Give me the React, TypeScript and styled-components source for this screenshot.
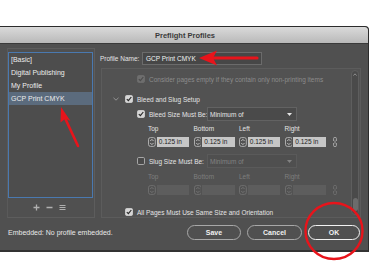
import React from 'react';
import styled, {createGlobalStyle} from 'styled-components';

const GlobalStyle = createGlobalStyle`
  html, body {
    margin: 0;
    padding: 0;
    background: #ffffff;
    width: 371px;
    height: 278px;
    overflow: hidden;
    font-family: "Liberation Sans", Arial, sans-serif;
  }
`

const Page = styled.div`
  position: relative;
  width: 371px;
  height: 278px;
  padding-top: 26px;
  box-sizing: border-box;
`

const Dialog = styled.div`
  width: 369px;
  height: 226px;
  box-sizing: border-box;
  border: 1px solid #2c2c2c;
  border-left: none;
  border-bottom: 2px solid #333;
  border-radius: 0 4px 0 0;
  background: #505050;
  display: flex;
  flex-direction: column;
  overflow: hidden;
`

const TitleBar = styled.div`
  height: 16px;
  flex: 0 0 auto;
  background: linear-gradient(#dadada, #b9b9b9);
  border-bottom: 1px solid #3a3a3a;
  border-radius: 0 3px 0 0;
  display: flex;
  align-items: center;
  justify-content: center;
  font-size: 7.5px;
  font-weight: bold;
  color: #3a3a3a;
  padding-left: 2px;
`

const Body = styled.div`
  flex: 1;
  padding: 4px 6px 0 7px;
  display: flex;
  flex-direction: column;
  color: #e4e4e4;
  font-size: 6.5px;
`

const Main = styled.div`
  display: flex;
  height: 170px;
`

const ProfilesPanel = styled.div`
  width: 88px;
  height: 170px;
  box-sizing: border-box;
  border: 1px solid #5d5d5d;
  border-left-color: #5a5a5a;
  padding: 3px 1px 0 0;
  display: flex;
  flex-direction: column;
  margin-right: 5px;
`

const ProfileList = styled.ul`
  list-style: none;
  margin: 0;
  padding: 0;
  height: 146px;
  box-sizing: border-box;
  border: 1px solid #4a79b0;
  background: #4d4d4d;
`

const ProfileItem = styled.li<{ $selected?: boolean }>`
  height: 13px;
  line-height: 13px;
  padding-left: 2px;
  font-size: 7px;
  background: ${({$selected}) => $selected ? '#5b6b7d' : 'transparent'};
  color: #ececec;
`

const ListTools = styled.div`
  flex: 1;
  display: flex;
  align-items: center;
  justify-content: center;
  gap: 6px;
  padding-right: 3px;
  color: #a9a9a9;
`

const RightColumn = styled.div`
  width: 261px;
  display: flex;
  flex-direction: column;
`

const NameRow = styled.div`
  margin-top: 4px;
  height: 13px;
  display: flex;
  align-items: center;
`

const NameLabel = styled.span`
  width: 42px;
`

const NameInput = styled.div`
  width: 120px;
  height: 13px;
  box-sizing: border-box;
  border: 1px solid #6b6b6b;
  background: #474747;
  padding-left: 3px;
  line-height: 11px;
  color: #f2f2f2;
`

const ScrollPanel = styled.div`
  margin: 3px 0 0 1px;
  width: 260px;
  height: 150px;
  box-sizing: border-box;
  border: 1px solid #5c5c5c;
  background: #525252;
  display: flex;
`

const Content = styled.div`
  flex: 1;
  padding-top: 5px;
  display: flex;
  flex-direction: column;
`

const Row = styled.div<{ $top: number; $indent: number; $h?: number }>`
  margin-top: ${({$top}) => $top}px;
  padding-left: ${({$indent}) => $indent}px;
  height: ${({$h}) => $h ?? 10}px;
  display: flex;
  align-items: center;
  white-space: nowrap;
`

const Text = styled.span<{ $dim?: boolean; $gap?: number }>`
  margin-left: ${({$gap}) => $gap ?? 3}px;
  color: ${({$dim}) => $dim ? '#8c8c8c' : '#e4e4e4'};
`

const SizeLabel = styled.span`
  width: 54px;
  margin-left: 4px;
`

const Dropdown = styled.div<{ $disabled?: boolean }>`
  margin-left: 4px;
  width: 90px;
  height: 14px;
  box-sizing: border-box;
  border: 1px solid ${({$disabled}) => $disabled ? '#5a5a5a' : '#626262'};
  background: ${({$disabled}) => $disabled ? '#4f4f4f' : '#4a4a4a'};
  display: flex;
  align-items: center;
  justify-content: space-between;
  padding: 0 4px 0 2px;
  color: ${({$disabled}) => $disabled ? '#828282' : '#e6e6e6'};
`

const Grid = styled.div`
  display: grid;
  grid-template-columns: repeat(4, 41px);
  column-gap: 4.5px;
  align-items: center;
`

const FieldLabel = styled.span<{ $dim?: boolean }>`
  color: ${({$dim}) => $dim ? '#7e7e7e' : '#e4e4e4'};
`

const Spinner = styled.div`
  display: flex;
  align-items: center;
  gap: 1px;
`

const NumberBox = styled.div<{ $disabled?: boolean }>`
  width: 33px;
  height: 10px;
  box-sizing: border-box;
  background: ${({$disabled}) => $disabled ? '#5d5d5d' : '#c6c6c6'};
  color: #222;
  font-size: 6.5px;
  line-height: 10px;
  padding-left: 2px;
`

const ScrollBar = styled.div`
  width: 8px;
  margin: 1px 1px 2px 0;
  box-sizing: border-box;
  border: 1px solid #5e5e5e;
  border-radius: 4px;
  background: #4a4a4a;
  display: flex;
  flex-direction: column;
  align-items: center;
  justify-content: space-between;
  padding: 2px 0 3px;
`

const Thumb = styled.div`
  width: 5px;
  height: 13px;
  border-radius: 3px;
  background: #6c6c6c;
`

const Footer = styled.div`
  margin-top: 7px;
  height: 15px;
  display: flex;
  align-items: center;
  justify-content: space-between;
`

const EmbeddedNote = styled.span`
  margin-left: 1px;
  font-size: 7px;
  color: #e8e8e8;
`

const Buttons = styled.div`
  display: flex;
  gap: 6px;
  padding-right: 2px;
`

const Button = styled.div<{ $w: number; $primary?: boolean }>`
  width: ${({$w}) => $w}px;
  height: 15px;
  box-sizing: border-box;
  border-radius: 8px;
  border: ${({$primary}) => $primary ? '1.5px solid #f2f2f2' : '1px solid #a8a8a8'};
  display: flex;
  align-items: center;
  justify-content: center;
  font-size: 7px;
  font-weight: bold;
  color: #f0f0f0;
`

const Annotations = styled.svg`
  position: absolute;
  left: 0;
  top: 0;
  pointer-events: none;
`

const CheckBox = ({checked, disabled}: { checked?: boolean; disabled?: boolean }) => (
  <svg width="8" height="8" viewBox="0 0 8 8" style={{flex: '0 0 auto'}}>
    <rect x="0.5" y="0.5" width="7" height="7" rx="1.2"
          fill={checked ? (disabled ? '#6e6e6e' : '#d6d6d6') : '#4a4a4a'}
          stroke={checked ? (disabled ? '#6e6e6e' : '#d6d6d6') : '#bdbdbd'} strokeWidth="0.8"/>
    {checked && <path d="M1.8 4.1 L3.4 5.7 L6.3 2" fill="none"
                      stroke={disabled ? '#4c4c4c' : '#2a2a2a'} strokeWidth="1.2"/>}
  </svg>
)

const SpinIcon = ({disabled}: { disabled?: boolean }) => (
  <svg width="8" height="10" viewBox="0 0 8 10">
    <rect x="0.5" y="0.5" width="7" height="9" rx="2" fill="none"
          stroke={disabled ? '#777' : '#c8c8c8'} strokeWidth="0.8"/>
    <path d="M2.3 4 L4 2.3 L5.7 4 M2.3 6 L4 7.7 L5.7 6" fill="none"
          stroke={disabled ? '#777' : '#d0d0d0'} strokeWidth="0.9"/>
  </svg>
)

const LinkIcon = ({disabled}: { disabled?: boolean }) => (
  <svg width="4" height="10" viewBox="0 0 4 10" style={{marginLeft: 7}}>
    <path d="M0.6 4 V1.6 A1.4 1.4 0 0 1 3.4 1.6 V4 M0.6 6 V8.4 A1.4 1.4 0 0 0 3.4 8.4 V6"
          fill="none" stroke={disabled ? '#737373' : '#bdbdbd'} strokeWidth="0.8"/>
    <path d="M2 3.5 V6.5" stroke={disabled ? '#737373' : '#bdbdbd'} strokeWidth="0.8"/>
  </svg>
)

const Caret = () => (
  <svg width="5" height="3" viewBox="0 0 5 3">
    <path d="M0 0 H5 L2.5 3 Z" fill="currentColor"/>
  </svg>
)

const Chevron = () => (
  <svg width="6" height="4" viewBox="0 0 6 4" style={{marginRight: 6}}>
    <path d="M0.5 0.8 L3 3.2 L5.5 0.8" fill="none" stroke="#9a9a9a" strokeWidth="0.9"/>
  </svg>
)

const ToolIcon = ({kind}: { kind: 'plus' | 'minus' | 'menu' }) => (
  <svg width="7" height="7" viewBox="0 0 7 7">
    {kind === 'plus' && <path d="M3.5 0.5 V6.5 M0.5 3.5 H6.5" stroke="#b0b0b0" strokeWidth="1.3"/>}
    {kind === 'minus' && <path d="M0.5 3.5 H6.5" stroke="#b0b0b0" strokeWidth="1.3"/>}
    {kind === 'menu' && <path d="M0.5 1.5 H6.5 M0.5 3.5 H6.5 M0.5 5.5 H6.5" stroke="#b0b0b0" strokeWidth="1"/>}
  </svg>
)

const profiles = ['[Basic]', 'Digital Publishing', 'My Profile', 'GCP Print CMYK'];
const sides = ['Top', 'Bottom', 'Left', 'Right'];

const SizeFields = ({disabled}: { disabled?: boolean }) => (
  <>
    <Row $top={disabled ? 3 : 2} $indent={46}>
      <Grid>
        {sides.map(s => <FieldLabel key={s} $dim={disabled}>{s}</FieldLabel>)}
      </Grid>
    </Row>
    <Row $top={4} $indent={46}>
      <Grid>
        {sides.map(s => (
          <Spinner key={s}>
            <SpinIcon disabled={disabled}/>
            <NumberBox $disabled={disabled}>{disabled ? '' : '0.125 in'}</NumberBox>
          </Spinner>
        ))}
      </Grid>
      <LinkIcon disabled={disabled}/>
    </Row>
  </>
)

export default function App() {
  return <Page>
    <GlobalStyle/>
    <Dialog>
      <TitleBar>Preflight Profiles</TitleBar>
      <Body>
        <Main>
          <ProfilesPanel>
            <ProfileList>
              {profiles.map(p => <ProfileItem key={p} $selected={p === 'GCP Print CMYK'}>{p}</ProfileItem>)}
            </ProfileList>
            <ListTools>
              <ToolIcon kind="plus"/>
              <ToolIcon kind="minus"/>
              <ToolIcon kind="menu"/>
            </ListTools>
          </ProfilesPanel>
          <RightColumn>
            <NameRow>
              <NameLabel>Profile Name:</NameLabel>
              <NameInput>GCP Print CMYK</NameInput>
            </NameRow>
            <ScrollPanel>
              <Content>
                <Row $top={0} $indent={35}>
                  <CheckBox checked disabled/>
                  <Text $dim $gap={4}>Consider pages empty if they contain only non-printing items</Text>
                </Row>
                <Row $top={10} $indent={11}>
                  <Chevron/>
                  <CheckBox checked/>
                  <Text $gap={4}>Bleed and Slug Setup</Text>
                </Row>
                <Row $top={3} $indent={35} $h={14}>
                  <CheckBox checked/>
                  <SizeLabel>Bleed Size Must Be:</SizeLabel>
                  <Dropdown>Minimum of<Caret/></Dropdown>
                </Row>
                <SizeFields/>
                <Row $top={7} $indent={35} $h={14}>
                  <CheckBox/>
                  <SizeLabel>Slug Size Must Be:</SizeLabel>
                  <Dropdown $disabled>Minimum of<Caret/></Dropdown>
                </Row>
                <SizeFields disabled/>
                <Row $top={12} $indent={23}>
                  <CheckBox checked/>
                  <Text $gap={4}>All Pages Must Use Same Size and Orientation</Text>
                </Row>
              </Content>
              <ScrollBar>
                <svg width="4" height="3" viewBox="0 0 4 3">
                  <path d="M0.4 2.6 L2 0.8 L3.6 2.6" fill="none" stroke="#a0a0a0" strokeWidth="0.8"/>
                </svg>
                <Thumb/>
              </ScrollBar>
            </ScrollPanel>
          </RightColumn>
        </Main>
        <Footer>
          <EmbeddedNote>Embedded: No profile embedded.</EmbeddedNote>
          <Buttons>
            <Button $w={54}>Save</Button>
            <Button $w={55}>Cancel</Button>
            <Button $w={52} $primary>OK</Button>
          </Buttons>
        </Footer>
      </Body>
    </Dialog>
    <Annotations width="371" height="278" viewBox="0 0 371 278">
      <line x1="257" y1="58" x2="210" y2="58" stroke="#e8141b" strokeWidth="3.2" strokeLinecap="round"/>
      <path d="M199 58 L217 50.5 L213 58 L217 65.5 Z" fill="#e8141b"/>
      <line x1="78" y1="146" x2="65" y2="118" stroke="#e8141b" strokeWidth="2.6" strokeLinecap="round"/>
      <path d="M61 107 L70.5 121 L65.5 118.5 L60.5 122.5 Z" fill="#e8141b"/>
      <ellipse cx="334" cy="231" rx="28.5" ry="28" fill="none" stroke="#e8141b" strokeWidth="2.4"/>
    </Annotations>
  </Page>
}
